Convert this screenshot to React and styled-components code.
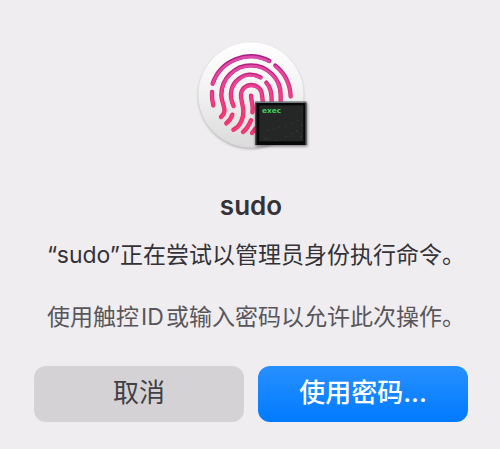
import React from 'react';
import styled, { createGlobalStyle, css } from 'styled-components';

const GlobalStyle = createGlobalStyle`
  *, *::before, *::after { box-sizing: border-box; }
  body {
    margin: 0;
    background: #efedf0;
    font-family: Inter, "Noto Sans CJK SC", sans-serif;
    color: #343237;
    -webkit-font-smoothing: antialiased;
  }
`;

const Dialog = styled.main`
  display: flex;
  flex-direction: column;
  align-items: center;
  padding: 35px 32px 27px 34px;
  text-align: center;
`;

const Icon = styled.svg`
  display: block;
  width: 128px;
  height: 120px;
`;

const Title = styled.h1`
  margin: 34px 0 0;
  font-size: 26px;
  line-height: 34px;
  font-weight: 600;
`;

/* The left padding balances the blank half of the closing full stop. */
const Message = styled.p`
  margin: 16px 0 0;
  padding-left: 10px;
  font-size: 23px;
  line-height: 32px;
  white-space: nowrap;
`;

const Hint = styled(Message)`
  margin-top: 30px;
  color: #58565b;
`;

const Latin = styled.span`
  margin: 0 2px;
`;

const Actions = styled.div`
  display: grid;
  grid-template-columns: 1fr 1fr;
  gap: 14px;
  width: 100%;
  margin-top: 33px;
`;

const Button = styled.button`
  height: 56px;
  padding: 0 0 2px;
  border: 0;
  border-radius: 12px;
  font: inherit;
  font-size: 26px;
  line-height: 36px;
  color: #414044;
  background: #d4d2d5;
  ${({ $primary }) =>
    $primary &&
    css`
      color: #fff;
      font-weight: 500;
      background: linear-gradient(#2890ff, #007aff);
    `}
`;

const Ridges = () => (
  <>
    <path d="M68 146A120 120 0 0 1 238 78" />
    <path d="M256 92Q299 126 302 184" />
    <path d="M66 171Q65 192 70 211" />
    <path d="M93 246C116 226 94 208 94 180A89 89 0 0 1 272 180V204" />
    <path d="M131 213C114 178 125 148 146 132C165 116 190 115 212 127" />
    <path d="M229 143Q246 160 245 200" />
    <path d="M130 284C149 276 161 252 160 228C160 211 152 195 153 180C155 139 214 141 216 180L219 204" />
    <path d="M183 182C183 197 191 214 187 232" />
    <path d="M127 239Q122 255 109 265" />
    <path d="M183 256Q173 280 159 291" />
    <path d="M196 281L186 294" />
  </>
);

function TouchIdIcon() {
  return (
    <Icon viewBox="-9 0 384 360" role="img" aria-label="Touch ID">
      <defs>
        <linearGradient id="disc" x1="0" y1="0" x2="0" y2="1">
          <stop offset="0" stopColor="#ffffff" />
          <stop offset="0.45" stopColor="#f3f3f3" />
          <stop offset="1" stopColor="#dadadb" />
        </linearGradient>
        <linearGradient id="ridge" gradientUnits="userSpaceOnUse" x1="0" y1="60" x2="0" y2="240">
          <stop offset="0" stopColor="#a51d83" />
          <stop offset="0.45" stopColor="#c9287c" />
          <stop offset="1" stopColor="#e82e6c" />
        </linearGradient>
        <linearGradient id="ridgeLight" gradientUnits="userSpaceOnUse" x1="0" y1="60" x2="0" y2="240">
          <stop offset="0" stopColor="#dc4cae" />
          <stop offset="0.5" stopColor="#ed4193" />
          <stop offset="1" stopColor="#f43a76" />
        </linearGradient>
        <filter id="soft" x="-20%" y="-20%" width="140%" height="140%">
          <feGaussianBlur stdDeviation="4" />
        </filter>
      </defs>
      <circle cx="183" cy="184" r="157" fill="#000" opacity="0.3" filter="url(#soft)" />
      <circle cx="183" cy="180" r="158" fill="url(#disc)" />
      <g fill="none" strokeLinecap="round">
        <g stroke="url(#ridge)" strokeWidth="13"><Ridges /></g>
        <g stroke="url(#ridgeLight)" strokeWidth="8" transform="translate(0 2)"><Ridges /></g>
      </g>
      <rect x="196" y="204" width="156" height="130" fill="#000" opacity="0.5" filter="url(#soft)" />
      <rect x="196" y="200" width="153" height="130" fill="#080808" />
      <path d="M196 201.5H349" stroke="#a5b5bc" strokeWidth="3" />
      <path d="M197.500 203V330M347.500 203V330" stroke="#555b5e" strokeWidth="3" />
      <rect x="208" y="211" width="132" height="108" fill="#252626" />
      <g fill="#454747">
        {[[223, 310], [234, 285], [250, 280], [265, 275], [286, 274], [304, 264], [323, 255], [232, 308], [255, 315], [286, 303], [304, 294], [318, 286], [331, 304], [334, 270]].map(([x, y]) => (
          <rect key={`${x}-${y}`} x={x} y={y} width="3" height="3" />
        ))}
      </g>
      <text x="216" y="234" fill="#43cf5c" fontFamily="'DejaVu Sans', sans-serif" fontWeight="700" fontSize="22">exec</text>
    </Icon>
  );
}

export default function App() {
  return (
    <>
      <GlobalStyle />
      <Dialog>
        <TouchIdIcon />
        <Title>sudo</Title>
        <Message>“sudo”正在尝试以管理员身份执行命令。</Message>
        <Hint>使用触控<Latin>ID</Latin>或输入密码以允许此次操作。</Hint>
        <Actions>
          <Button type="button">取消</Button>
          <Button type="button" $primary>使用密码...</Button>
        </Actions>
      </Dialog>
    </>
  );
}
